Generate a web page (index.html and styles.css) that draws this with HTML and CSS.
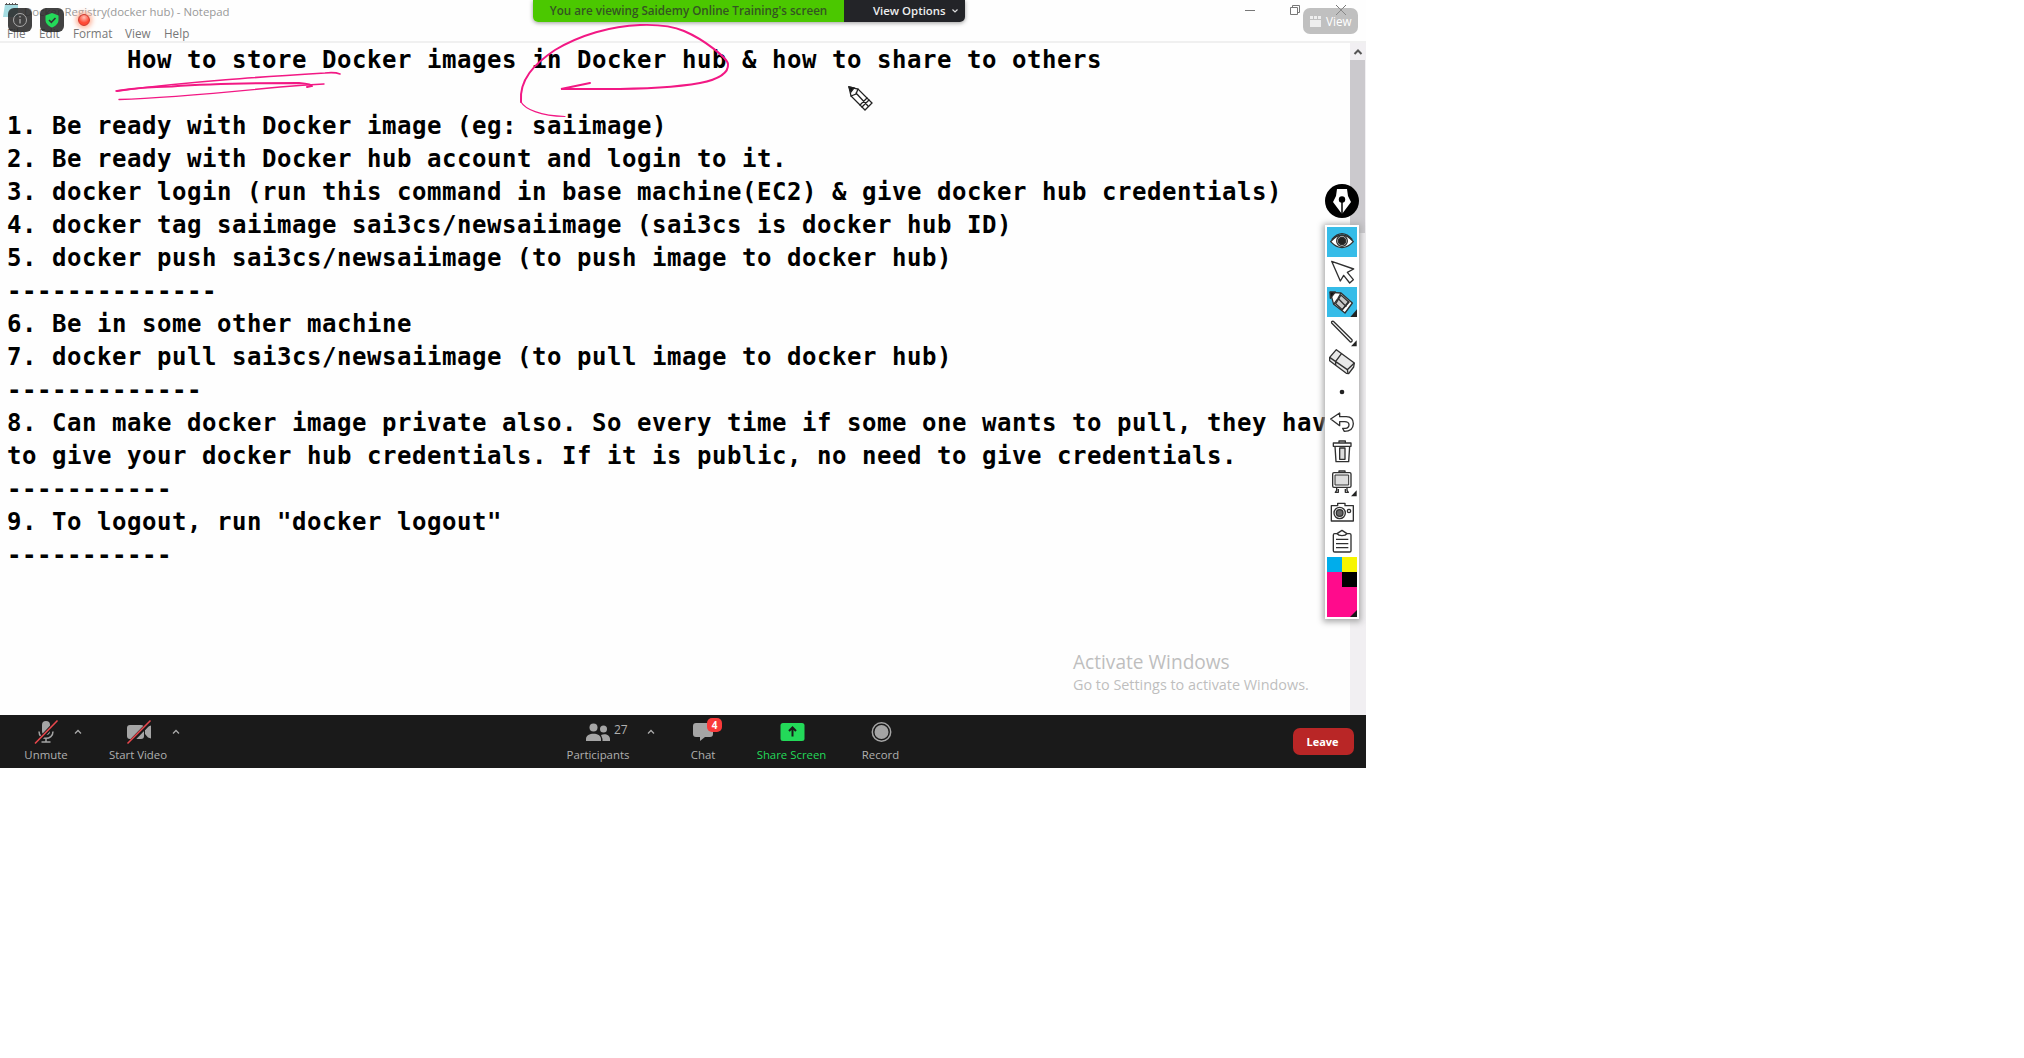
FILE: index.html
```html
<!DOCTYPE html>
<html lang="en">
<head>
<meta charset="utf-8">
<title>Docker Registry(docker hub) - Notepad</title>
<link rel="stylesheet" href="styles.css">
</head>
<body>
<main class="screen">
  <header class="window-head">
    <div class="title-row">
      <svg class="notepad-icon" viewBox="0 0 16 18"><path d="M2 4h13v13H0z" fill="#a5dce2"/><path d="M2 4.500h13M3.500 3v2M6.500 3v2M9.500 3v2M12.500 3v2" stroke="#555" stroke-width="1"/></svg>
      <span class="window-title">Docker Registry(docker hub) - Notepad</span>
      <svg class="window-controls" viewBox="0 0 110 20" fill="none" stroke="#777"><path d="M5 10.500h10M96 5l10 10M106 5l-10 10"/><path d="M50.500 7.500h7v7h-7zM52.500 7.500v-2h7v7h-2"/></svg>
    </div>
    <nav class="menu-row"><span class="m-file">File</span><span class="m-edit">Edit</span><span class="m-format">Format</span><span class="m-view">View</span><span>Help</span></nav>
  </header>
  <section class="editor">
<pre class="document">        How to store Docker images in Docker hub &amp; how to share to others

1. Be ready with Docker image (eg: saiimage)
2. Be ready with Docker hub account and login to it.
3. docker login (run this command in base machine(EC2) &amp; give docker hub credentials)
4. docker tag saiimage sai3cs/newsaiimage (sai3cs is docker hub ID)
5. docker push sai3cs/newsaiimage (to push image to docker hub)
--------------
6. Be in some other machine
7. docker pull sai3cs/newsaiimage (to pull image to docker hub)
-------------
8. Can make docker image private also. So every time if some one wants to pull, they have
to give your docker hub credentials. If it is public, no need to give credentials.
-----------
9. To logout, run "docker logout"
-----------</pre>
    <div class="scrollbar">
      <svg class="scroll-arrow" viewBox="0 0 16 17"><path d="M4.500 11L8 7.500 11.500 11" fill="none" stroke="#555" stroke-width="2"/></svg>
      <div class="scroll-thumb"></div>
    </div>
  </section>
  <footer class="meeting-bar">
    <div class="action">
      <svg class="glyph" viewBox="0 0 60 30"><g fill="#a5a5a5"><rect x="26" y="4" width="8" height="14" rx="4"/><path d="M23 14.500c0 9 14 9 14 0M30 21v4M25.500 25h9" fill="none" stroke="#a5a5a5" stroke-width="1.500"/></g><path d="M19.500 27L41 4" stroke="#1a1a1a" stroke-width="4"/><path d="M19 26.500L41.500 3.500" stroke="#e8474c" stroke-width="1.600"/></svg>
      <span>Unmute</span>
      <svg class="caret" viewBox="0 0 8 6"><path d="M1 4.500L4 1.500l3 3" /></svg>
    </div>
    <div class="action">
      <svg class="glyph" viewBox="0 0 60 30"><rect x="19" y="8" width="17" height="14" rx="3" fill="#a5a5a5"/><path d="M37 13l3-3.500 3-1v13l-3-1-3-3.500z" fill="#a5a5a5"/><path d="M20.500 27L43 4" stroke="#1a1a1a" stroke-width="4"/><path d="M19.500 26.500L42.500 3.500" stroke="#e8474c" stroke-width="1.600"/></svg>
      <span>Start Video</span>
      <svg class="caret caret-video" viewBox="0 0 8 6"><path d="M1 4.500L4 1.500l3 3" /></svg>
    </div>
    <div class="action participants">
      <svg class="glyph" viewBox="0 0 60 30"><g fill="#a5a5a5"><circle cx="25.500" cy="10.500" r="4"/><circle cx="35.500" cy="12" r="3.500"/><path d="M18 24v-2c0-7 15-7 15 0v2zM34.500 24v-2l-1.500-4c4-2 9 0 9 4v2z"/></g></svg>
      <span>Participants</span><b class="count">27</b>
      <svg class="caret caret-people" viewBox="0 0 8 6"><path d="M1 4.500L4 1.500l3 3" /></svg>
    </div>
    <div class="action chat">
      <svg class="glyph" viewBox="0 0 60 30"><path d="M23 6h14q3 0 3 3v8q0 3-3 3h-5l-5 4v-4h-4q-3 0-3-3V9q0-3 3-3z" fill="#a5a5a5"/></svg>
      <span>Chat</span><b class="badge">4</b>
    </div>
    <div class="action share">
      <svg class="glyph" viewBox="0 0 60 30"><rect x="18.500" y="6" width="24" height="18" rx="2.500" fill="#23d959"/><path d="M30.500 19.500V11M27 14l3.500-3.500L34 14" fill="none" stroke="#1a1a1a" stroke-width="2"/></svg>
      <span>Share Screen</span>
    </div>
    <div class="action record">
      <svg class="glyph" viewBox="0 0 60 30"><circle cx="30.500" cy="15" r="9.200" fill="none" stroke="#a5a5a5" stroke-width="1.500"/><circle cx="30.500" cy="15" r="7" fill="#a5a5a5"/></svg>
      <span>Record</span>
    </div>
    <button class="leave">Leave</button>
  </footer>

  <div class="status-icons">
    <svg class="status-chip" viewBox="0 0 24 24"><circle cx="12" cy="12" r="6.500" fill="none" stroke="#aaa"/><path d="M12 11v4.500M12 8v1.500" stroke="#aaa" stroke-width="1.300"/></svg>
    <svg class="status-chip" viewBox="0 0 24 24"><path d="M12 5l6.500 2.500v4.500c0 3.500-3 6-6.500 7.500C8.500 18 5.500 15.500 5.500 12V7.500z" fill="#23d959"/><path d="M9 12l2.300 2.300L15.500 10" fill="none" stroke="#333" stroke-width="1.600"/></svg>
    <i class="rec-light"></i>
  </div>
  <div class="view-banner"><span class="viewing">You are viewing Saidemy Online Training's screen</span><span class="options">View Options<svg class="chevron" viewBox="0 0 8 6"><path d="M1.500 1.500L4 4l2.500-2.500" fill="none" stroke="#ddd" stroke-width="1.200"/></svg></span></div>
  <div class="view-button"><svg viewBox="0 0 11 11" fill="#eee"><path d="M0 0h3v3H0zM4 0h3v3H4zM8 0h3v3H8zM0 4h11v7H0z"/></svg>View</div>

  <svg class="ink" viewBox="0 0 1366 768" fill="none" stroke="#f21884" stroke-linecap="round">
    <path d="M116 91C195 81 260 77 325 73Q335 72 340 74" stroke-width="1.600"/>
    <path d="M117 91Q140 87 172 86.500C220 83 265 83 299 83Q312 84 312 86L307 87" stroke-width="1.900"/>
    <path d="M119 99.500C170 98 230 92 280 87Q303 85 324 84" stroke-width="1.400"/>
    <path d="M521 102C519 80 534 64 555 50C580 35 611 26 640 25Q668 24 684 31C705 40 727 58 728 64C729 75 715 80 700 83C672 88 640 89 605 89H561L590 83" stroke-width="2"/>
    <path d="M565 116.500C540 116 525 109 521 102" stroke-width="1.200"/>
    <g transform="translate(848 86)" stroke="#222" stroke-width="1.300" stroke-linejoin="miter"><path d="M1 1l9 2 14 14-7 7L3 10z" fill="#fff"/><path d="M1 1l5 1-3 4z" fill="#111"/><path d="M10 3L8 8l-5 2M8 7l12 13M19 12l-7 7M21 14l-7 7"/></g>
  </svg>

  <svg class="pen-logo" viewBox="0 0 34 34"><circle cx="17" cy="17" r="17" fill="#000"/><path d="M12 5h10l1 7 3 6-9 12-9-12 3-6z" fill="#fff"/><path d="M17 16v14" stroke="#000" stroke-width="1.500"/><circle cx="17" cy="15.500" r="3.200" fill="#000"/></svg>
  <aside class="tools">
    <svg class="active" viewBox="0 0 90 90"><path d="M11 44Q45 4 79 44Q45 80 11 44z" fill="#fff"/><path d="M14 38Q45 2 76 38"/><circle cx="45" cy="42" r="16" fill="#fff"/><circle cx="45" cy="42" r="11" fill="#222"/></svg>
    <svg viewBox="0 0 90 90"><path d="M14 13L80 36 61 46 79 68 68 78 50 55 40 72z" fill="#fff"/></svg>
    <svg class="active" viewBox="0 0 90 90"><path d="M10 16L42 18 76 48 54 78 20 52z" fill="#fff"/><path d="M42 24L66 46 46 68 26 50z" fill="#c8c8c8"/><path d="M9 15h16L10 34z" fill="#111"/><path d="M42 18L33 34 20 52M32 33l26 26M66 42L44 70"/><path d="M90 67v23H70z" fill="#222" stroke="none"/></svg>
    <svg viewBox="0 0 90 90"><path d="M14 18q-2-6 5-5L75 68q2 7-5 7z" fill="#fff"/><path d="M89 70v18H72z" fill="#222" stroke="none"/></svg>
    <svg viewBox="0 0 90 90"><path d="M28 8L82 48 80 60 65 80 58 79 8 41V31z" fill="#e8e8e8"/><path d="M8 31L61 68 82 48M61 68l2 11M44 19L26 43v11"/></svg>
    <svg viewBox="0 0 90 90"><circle cx="45" cy="45" r="7" fill="#222" stroke="none"/></svg>
    <svg viewBox="0 0 90 90"><path d="M11 36L38 18V29H58Q79 30 79 50 78 73 52 73L47 64H55Q66 63 66 53 65 44 53 44H38V56z" fill="#fff"/></svg>
    <svg viewBox="0 0 90 90"><path d="M36 18v-6h19v6M19 18h53v10H19zM24 28h44l-3 46H27z" fill="#fff"/><path d="M38 33v34h16V33z" fill="#ddd"/></svg>
    <svg viewBox="0 0 90 90"><path d="M36 17v-5h18v5M29 62v8l-4 6h9V66M60 62v8l4 6h-9V66" fill="#fff"/><rect x="17" y="17" width="55" height="44" rx="4" fill="#fff"/><rect x="24" y="24" width="41" height="30" fill="#ddd" stroke-width="3"/><path d="M89 70v18H72z" fill="#222" stroke="none"/></svg>
    <svg viewBox="0 0 90 90"><path d="M13 26H32V19H54V26H79V72H13z" fill="#fff"/><circle cx="38" cy="48" r="17" fill="#eee"/><circle cx="38" cy="48" r="10" fill="#666"/><circle cx="66" cy="42" r="5"/></svg>
    <svg viewBox="0 0 90 90"><rect x="19" y="20" width="53" height="55" rx="4" fill="#fff"/><path d="M30 20L45 10l15 10q-4 6-15 6t-15-6z" fill="#fff"/><path d="M27 37h37M27 50h37M27 62h37"/></svg>
    <div class="palette"><i class="cyan"></i><i class="yellow"></i><i></i><i class="black"></i><i class="more"></i></div>
  </aside>
  <div class="activation"><p class="activate-title">Activate Windows</p><p class="activate-text">Go to Settings to activate Windows.</p></div>
</main>
</body>
</html>
```
FILE: styles.css
```css
* { box-sizing: border-box; }
body { margin: 0; background: #fff; font-family: "Open Sans", "Noto Sans", sans-serif; }
.screen { position: relative; width: 1366px; height: 768px; display: flex; flex-direction: column; overflow: hidden; background: #fefefe; }
.window-head { height: 43px; border-bottom: 2px solid #f0f0f0; color: #777; font-size: 11.5px; }
.title-row { height: 24px; display: flex; padding-left: 3px; }
.notepad-icon { width: 16px; height: 18px; }
.window-title { margin-left: 5px; line-height: 24px; color: #999; font-size: 11.4px; white-space: nowrap; }
.window-controls { width: 110px; height: 20px; margin-left: auto; margin-right: 16px; }
.menu-row { display: flex; padding-left: 7px; line-height: 18px; font-size: 11.7px; }
.m-file { width: 32px; }
.m-edit { width: 34px; }
.m-format { width: 52px; }
.m-view { width: 39px; }

.editor { flex: 1; min-height: 0; display: flex; }
.document { flex: 1; min-width: 0; overflow: hidden; margin: 0; padding: 1px 0 0 7px; color: #000; font: bold 24px/33px "DejaVu Sans Mono", "Liberation Mono", monospace; letter-spacing: .551px; }
.scrollbar { width: 16px; background: #f1eff2; }
.scroll-arrow { display: block; width: 16px; height: 17px; }
.scroll-thumb { width: 15px; height: 173px; background: #cbc9cd; }

.meeting-bar { height: 53px; display: flex; align-items: flex-start; background: #1a1a1a; color: #b0b0b0; font-size: 11.4px; }
.action { position: relative; width: 92px; height: 53px; padding-top: 2px; display: flex; flex-direction: column; align-items: center; line-height: 16px; white-space: nowrap; }
.glyph { width: 60px; height: 30px; flex: none; }
.caret { position: absolute; left: 74px; top: 14px; width: 8px; height: 6px; fill: none; stroke: #aaa; stroke-width: 1.3; }
.caret-video { left: 80px; }
.caret-people { left: 102px; }
.participants { width: 106px; margin-left: 361px; }
.chat { width: 104px; }
.share { width: 73px; color: #23d959; }
.record { width: 105px; }
.count { position: absolute; left: 69px; top: 7px; font-weight: 400; font-size: 12px; }
.badge { position: absolute; left: 56px; top: 3px; width: 15px; height: 14px; border-radius: 5px; background: #f93a3a; color: #fff; text-align: center; font-size: 10px; line-height: 14px; }
.leave { width: 61px; height: 27px; margin: 13px 12px 0 auto; padding: 0 2px 0 0; border: 0; border-radius: 7px; background: #b92626; color: #fff; font: bold 11px/26px "Open Sans", sans-serif; }

.status-icons { position: absolute; left: 8px; top: 8px; display: flex; gap: 8px; }
.status-chip { width: 24px; height: 24px; border-radius: 6px; background: rgba(38, 38, 38, .87); }
.rec-light { width: 12px; height: 12px; margin: 6px 0 0 6px; border: 1px solid #cf3528; border-radius: 50%; background: radial-gradient(circle at 50% 25%, #ffc0b5, #ff4935 60%); box-shadow: 0 0 5px 2px #ffae92; }
.view-banner { position: absolute; left: 533px; top: 0; width: 432px; height: 22px; display: flex; border-radius: 0 0 5px 5px; overflow: hidden; box-shadow: 0 1px 4px #999; font-size: 11.4px; font-weight: 600; line-height: 22px; white-space: nowrap; }
.viewing { width: 311px; background: #4bc800; color: #345522; text-align: center; font-size: 11.65px; }
.options { flex: 1; padding-left: 29px; background: #232428; color: #eee; }
.chevron { width: 8px; height: 6px; margin-left: 5px; vertical-align: 1px; }
.view-button { position: absolute; left: 1303px; top: 8px; width: 55px; height: 26px; display: flex; align-items: center; gap: 5px; padding-left: 7px; border-radius: 7px; background: rgba(150, 150, 150, .6); color: #fff; font-size: 11.7px; line-height: 24px; }
.view-button svg { width: 11px; height: 11px; }
.ink { position: absolute; left: 0; top: 0; width: 1366px; height: 768px; pointer-events: none; }
.pen-logo { position: absolute; left: 1325px; top: 184px; width: 34px; height: 34px; }
.tools { position: absolute; left: 1325px; top: 225px; width: 34px; height: 394px; padding: 2px; background: #fff; box-shadow: 0 1px 6px 2px #aaa; }
.tools svg { display: block; width: 30px; height: 30px; fill: none; stroke: #303030; stroke-width: 4; stroke-linejoin: round; }
.tools .active { background: #36bce8; }
.palette { display: grid; grid-template: 15px 15px 30px / 15px 15px; background: #ff0b8c; }
.cyan { background: #00adeb; }
.yellow { background: #f7f500; }
.black { background: #000; }
.more { grid-column: 2; width: 7px; height: 7px; place-self: end; background: #171717; clip-path: polygon(100% 0, 100% 100%, 0 100%); }
.activation { position: absolute; left: 1073px; top: 649px; color: #bebebe; white-space: nowrap; }
.activation p { margin: 0; }
.activate-title { font-size: 19.1px; line-height: 26px; }
.activate-text { font-size: 14.4px; line-height: 20px; }
```
